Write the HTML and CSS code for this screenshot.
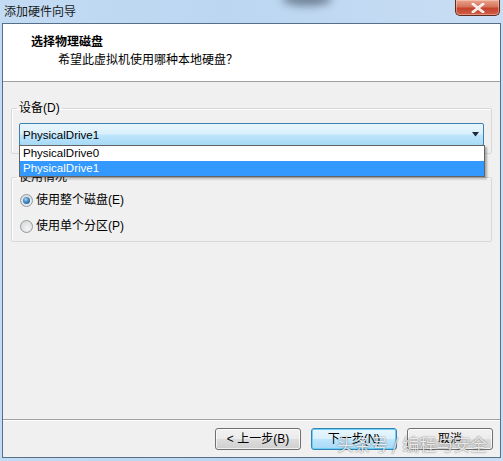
FILE: index.html
```html
<!DOCTYPE html>
<html lang="zh-CN">
<head>
<meta charset="utf-8">
<title>添加硬件向导</title>
<link rel="stylesheet" href="styles.css">
</head>
<body>
<div class="window">
  <div class="titlebar">
    <span class="title">添加硬件向导</span>
    <span class="blur"></span>
    <button class="close" aria-label="关闭">
      <svg width="14" height="10" viewBox="0 0 14 10"><path d="M2 1 L12 9 M12 1 L2 9" stroke="#fff" stroke-width="2.6" stroke-linecap="square"/><path d="M2 1 L12 9 M12 1 L2 9" stroke="#f4e6e2" stroke-width="1.2"/></svg>
    </button>
  </div>
  <div class="dialog">
    <div class="header">
      <div class="h-title">选择物理磁盘</div>
      <div class="h-sub">希望此虚拟机使用哪种本地硬盘？</div>
    </div>
    <div class="body">
      <fieldset class="group g1">
        <legend>设备(D)</legend>
        <div class="combo">
          <span class="combo-text">PhysicalDrive1</span>
          <svg class="arrow" width="7" height="5" viewBox="0 0 7 5"><path d="M0 0 H7 L3.5 4.5 Z" fill="#1d2b38"/></svg>
          <ul class="droplist">
            <li>PhysicalDrive0</li>
            <li class="sel">PhysicalDrive1</li>
          </ul>
        </div>
      </fieldset>
      <fieldset class="group g2">
        <legend>使用情况</legend>
        <label class="radio"><span class="dot on"></span>使用整个磁盘(E)</label>
        <label class="radio"><span class="dot"></span>使用单个分区(P)</label>
      </fieldset>
      <div class="footer">
        <button class="btn">&lt; 上一步(B)</button>
        <button class="btn def">下一步(N)</button>
        <button class="btn">取消</button>
      </div>
      <div class="watermark">头条号 / 编程与安全</div>
    </div>
  </div>
</div>
</body>
</html>
```
FILE: styles.css
```css
html, body {
  margin: 0;
  padding: 0;
}
body {
  background: #c8ddf2;
  font-family: "Liberation Sans", "Noto Sans CJK SC", sans-serif;
  font-size: 12px;
  color: #000;
}
.window {
  width: 503px;
  height: 461px;
  background: linear-gradient(90deg, #c3dbf3 0%, #bcd6f1 45%, #c1d9f2 70%, #c9def4 100%);
  overflow: hidden;
}
.titlebar {
  height: 23px;
  display: flex;
  align-items: flex-start;
  position: relative;
}
.title {
  padding: 3px 0 0 4px;
  line-height: 16px;
  font-family: "Noto Sans CJK SC", sans-serif;
  font-size: 12px;
  color: #1a1a1a;
}
.blur {
  position: absolute;
  left: 282px;
  top: -8px;
  width: 50px;
  height: 14px;
  border-radius: 50%;
  background: #5d6f82;
  filter: blur(4px);
  opacity: 0.8;
}
.close {
  margin-left: auto;
  margin-right: 3px;
  width: 45px;
  height: 16px;
  padding: 0;
  border: 1px solid #5e2a22;
  border-top: none;
  border-radius: 0 0 5px 5px;
  background: linear-gradient(#e9a58f 0%, #d6735b 45%, #c4432b 55%, #d0604a 100%);
  display: flex;
  align-items: center;
  justify-content: center;
  box-shadow: inset 0 0 0 1px rgba(255, 220, 200, 0.45);
}
.dialog {
  margin-left: 2px;
  width: 497px;
  height: 433px;
  border: 1px solid #566f88;
  background: #f0f0f0;
  display: flex;
  flex-direction: column;
}
.header {
  background: #fff;
  border-bottom: 1px solid #a0a0a0;
  padding: 9px 0 0 28px;
  box-sizing: border-box;
  height: 58px;
  font-family: "Noto Sans CJK SC", sans-serif;
  line-height: 16px;
}
.h-title {
  font-weight: bold;
}
.h-sub {
  margin: 2px 0 0 27px;
}
.body {
  flex: 1;
  display: flex;
  flex-direction: column;
  position: relative;
}
.group {
  margin: 0 8px;
  padding: 7px;
  border: 1px solid #d8d8d8;
  border-radius: 2px;
  box-shadow: 1px 1px 0 #fff inset;
  min-width: 0;
}
.group legend {
  padding: 0 2px;
  margin-left: -2px;
  line-height: 16px;
}
.g1 {
  margin-top: 18px;
}
.g2 {
  margin-top: 15px;
}
.combo {
  position: relative;
  height: 23px;
  box-sizing: border-box;
  border: 1px solid #3c7fb1;
  border-radius: 2px;
  background: linear-gradient(#eaf6fd 0%, #d9f0fc 48%, #bee6fd 52%, #a7d9f5 100%);
  display: flex;
  align-items: center;
  padding-left: 3px;
  font-size: 11.5px;
}
.combo-text {
  flex: 1;
}
.arrow {
  margin-right: 4px;
}
.droplist {
  position: absolute;
  left: -1px;
  right: -2px;
  top: 21px;
  margin: 0;
  padding: 0;
  list-style: none;
  background: #fff;
  border: 1px solid #646464;
  box-shadow: 2px 2px 2px rgba(0, 0, 0, 0.3);
  z-index: 2;
}
.droplist li {
  height: 15px;
  line-height: 15px;
  padding-left: 3px;
  font-size: 11.5px;
}
.droplist li.sel {
  background: #3399ff;
  color: #fff;
}
.radio {
  display: flex;
  align-items: center;
  gap: 3px;
  line-height: 16px;
  margin-left: 1px;
}
.radio + .radio {
  margin-top: 10px;
}
.dot {
  width: 11px;
  height: 11px;
  border-radius: 50%;
  border: 1px solid #8f9a9f;
  background: radial-gradient(circle at 60% 65%, #f5f5f5 0%, #dcdcdc 70%, #cfcfcf 100%);
  position: relative;
}
.dot.on::after {
  content: "";
  position: absolute;
  left: 2px;
  top: 2px;
  width: 7px;
  height: 7px;
  border-radius: 50%;
  background: radial-gradient(circle at 40% 35%, #a9d4f2 0%, #3c87c8 45%, #1b4f87 100%);
}
.footer {
  margin-top: auto;
  border-top: 1px solid #a0a0a0;
  box-shadow: inset 0 1px 0 #fff;
  padding: 8px 7px 7px 0;
  display: flex;
  justify-content: flex-end;
  gap: 10px;
}
.btn {
  width: 86px;
  height: 22px;
  padding: 0;
  border: 1px solid #707070;
  border-radius: 3px;
  background: linear-gradient(#f2f2f2 0%, #ebebeb 49%, #dddddd 51%, #cfcfcf 100%);
  box-shadow: inset 0 0 0 1px rgba(255, 255, 255, 0.7);
  font-family: "Liberation Sans", "Noto Sans CJK SC", sans-serif;
  font-size: 12px;
  color: #000;
  line-height: 18px;
}
.btn.def {
  border-color: #3c7fb1;
  background: linear-gradient(#eaf6fd 0%, #d9f0fc 49%, #bee6fd 51%, #a7d9f5 100%);
  box-shadow: inset 0 0 0 1px #67d1f8;
}
.watermark {
  position: absolute;
  left: 334px;
  bottom: 2px;
  font-family: "Noto Sans CJK SC", sans-serif;
  font-size: 17px;
  line-height: 22px;
  color: rgba(255, 255, 255, 0.85);
  text-shadow: 0 0 1px rgba(0, 0, 0, 0.45), 0 0 2px rgba(0, 0, 0, 0.25);
  pointer-events: none;
}
```
